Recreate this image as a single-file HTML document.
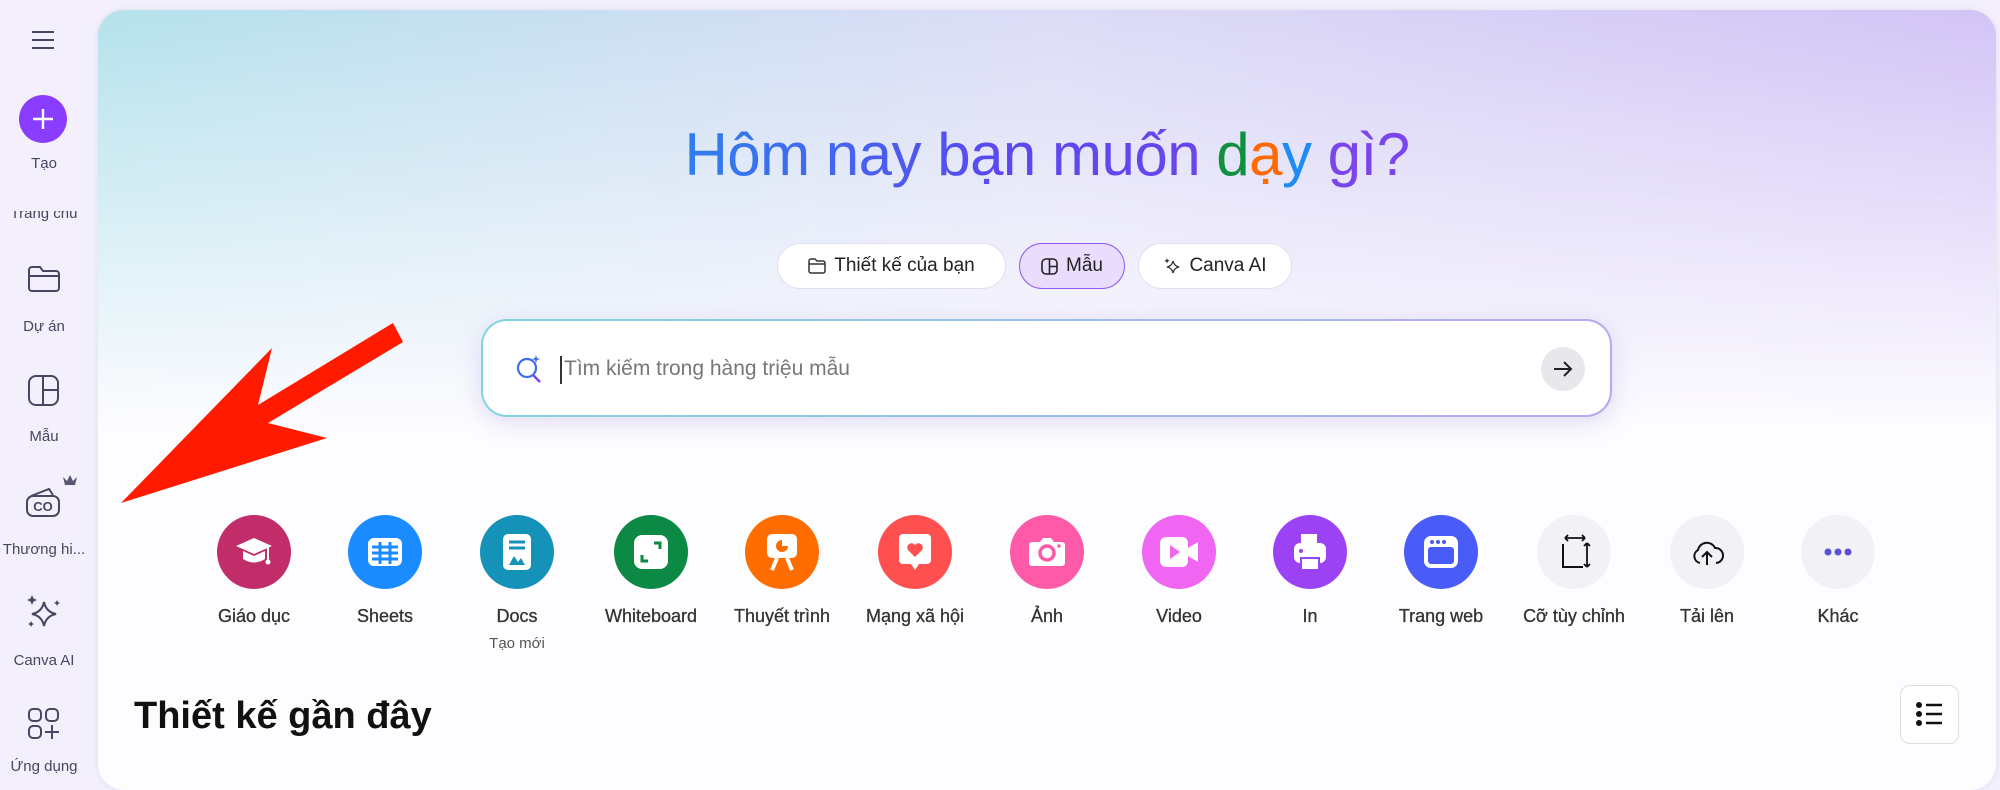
<!DOCTYPE html>
<html><head><meta charset="utf-8"><style>
*{margin:0;padding:0;box-sizing:border-box}
body{width:2000px;height:766px;overflow:hidden;background:#f3f0fb;font-family:"Liberation Sans",sans-serif;position:relative;color:#222}
.side{position:absolute;left:0;top:0;width:98px;height:766px;background:#f3f0fb}
.si{position:absolute;left:0;width:88px;text-align:center;font-size:15px;color:#4a4560}
.panel{position:absolute;left:98px;top:10px;width:1898px;height:780px;border-radius:26px;background:linear-gradient(180deg,rgba(255,255,255,0) 0,#fdfcff 420px),linear-gradient(90deg,#b4e2ec 0,#dcdcf6 50%,#d2c3f6 100%);overflow:hidden;box-shadow:0 0 6px rgba(120,100,180,.15)}
h1{position:absolute;left:0;width:100%;top:110px;text-align:center;font-weight:400;font-size:60px;letter-spacing:-0.5px}
.pill{position:absolute;top:243px;height:46px;border-radius:23px;border:1.5px solid #e4def4;background:#fff;font-size:19px;display:flex;align-items:center;justify-content:center;gap:8px;color:#222}
.search{position:absolute;left:481px;top:319px;width:1131px;height:98px;border-radius:26px;background:#fff;border:2px solid transparent;background-image:linear-gradient(#fff,#fff),linear-gradient(90deg,#7fd6df,#b9a8f0);background-origin:border-box;background-clip:padding-box,border-box;box-shadow:0 6px 24px rgba(150,130,220,.25)}
.ic{position:absolute;top:515px;width:132px;text-align:center}
.ic .c{width:74px;height:74px;border-radius:50%;margin:0 auto;display:flex;align-items:center;justify-content:center}
.ic .l{margin-top:17px;font-size:18px;color:#333;-webkit-text-stroke:0.3px #333}
.ic .s{margin-top:8px;font-size:15px;color:#555}
</style></head><body>
<div class="side">
 <svg style="position:absolute;left:31px;top:30px" width="24" height="20"><path d="M1 2h22M1 10h22M1 18h22" stroke="#4a4560" stroke-width="2"/></svg>
 <div style="position:absolute;left:19px;top:95px;width:48px;height:48px;border-radius:50%;background:#8b3dff"></div>
 <svg style="position:absolute;left:31px;top:107px" width="24" height="24"><path d="M12 2v20M2 12h20" stroke="#fff" stroke-width="2.4"/></svg>
 <div class="si" style="top:155px">Tạo</div>
 <div class="si" style="top:205px;clip-path:inset(6px 0 0 0)">Trang chủ</div>
 <svg style="position:absolute;left:27px;top:264px" width="34" height="30"><path d="M2 6a3 3 0 0 1 3-3h8l3 4h13a3 3 0 0 1 3 3v14a3 3 0 0 1-3 3H5a3 3 0 0 1-3-3zM2 12h30" fill="none" stroke="#4a4560" stroke-width="2"/></svg>
 <div class="si" style="top:318px">Dự án</div>
 <svg style="position:absolute;left:27px;top:374px" width="33" height="33"><rect x="2" y="2" width="29" height="29" rx="7" fill="none" stroke="#4a4560" stroke-width="2"/><path d="M16 2v29M16 16h15" stroke="#4a4560" stroke-width="2"/></svg>
 <div class="si" style="top:428px">Mẫu</div>
 <svg style="position:absolute;left:25px;top:486px" width="36" height="32"><path d="M6 10l18-7 4 6" fill="none" stroke="#4a4560" stroke-width="2"/><rect x="2" y="10" width="32" height="20" rx="6" fill="none" stroke="#4a4560" stroke-width="2"/><text x="18" y="25" font-size="13" font-family="Liberation Sans" text-anchor="middle" fill="#4a4560" font-weight="bold">CO</text></svg>
 <svg style="position:absolute;left:62px;top:474px" width="16" height="13"><path d="M1 3l4 4 3-6 3 6 4-4-2 8H3z" fill="#5a5570"/></svg>
 <div class="si" style="top:541px;left:-6px;width:100px;white-space:nowrap">Thương hi...</div>
 <svg style="position:absolute;left:24px;top:594px" width="38" height="36"><path d="M20 8q2 10 12 12q-10 2-12 12q-2-10-12-12q10-2 12-12z" fill="none" stroke="#4a4560" stroke-width="2"/><path d="M8 1l1.5 3.5L13 6l-3.5 1.5L8 11l-1.5-3.5L3 6l3.5-1.5zM33 6l1 2 2 1-2 1-1 2-1-2-2-1 2-1zM7 27l1 2 2 1-2 1-1 2-1-2-2-1 2-1z" fill="#4a4560"/></svg>
 <div class="si" style="top:652px">Canva AI</div>
 <svg style="position:absolute;left:27px;top:707px" width="34" height="34"><rect x="2" y="2" width="12" height="12" rx="4" fill="none" stroke="#4a4560" stroke-width="2"/><rect x="19" y="2" width="12" height="12" rx="4" fill="none" stroke="#4a4560" stroke-width="2"/><rect x="2" y="19" width="12" height="12" rx="4" fill="none" stroke="#4a4560" stroke-width="2"/><path d="M25 18v14M18 25h14" stroke="#4a4560" stroke-width="2"/></svg>
 <div class="si" style="top:758px">Ứng dụng</div>
</div>
<div class="panel">
 <h1><span style="background:linear-gradient(90deg,#2f7fee,#5b48f0 60%,#6a45ec);-webkit-background-clip:text;background-clip:text;color:transparent">Hôm nay bạn muốn </span><span style="color:#11913f">d</span><span style="color:#ff6a00">ạ</span><span style="color:#1e8cf5">y</span><span style="color:#7a45ea"> gì?</span></h1>
</div>
<div class="pill" style="left:777px;width:229px"><svg width="18" height="16"><path d="M1 3a2 2 0 0 1 2-2h4l2 2h6a2 2 0 0 1 2 2v8a2 2 0 0 1-2 2H3a2 2 0 0 1-2-2zM1 6h16" fill="none" stroke="#333" stroke-width="1.5"/></svg>Thiết kế của bạn</div>
<div class="pill" style="left:1019px;width:106px;background:#e9dcfd;border-color:#8b5ef0"><svg width="17" height="17"><rect x="1" y="1" width="15" height="15" rx="4" fill="none" stroke="#222" stroke-width="1.6"/><path d="M8.5 1v15M8.5 8.5h7" stroke="#222" stroke-width="1.6"/></svg>Mẫu</div>
<div class="pill" style="left:1138px;width:154px"><svg width="18" height="18"><path d="M10 4q1 5 6 6q-5 1-6 6q-1-5-6-6q5-1 6-6z" fill="none" stroke="#333" stroke-width="1.3"/><path d="M4 1l.8 2 2 .8-2 .8L4 6.6l-.8-2-2-.8 2-.8z" fill="#333"/></svg>Canva AI</div>
<div class="search">
 <svg style="position:absolute;left:31px;top:32px" width="32" height="32"><circle cx="13" cy="15" r="9" fill="none" stroke="#3d6ee8" stroke-width="2.2"/><path d="M19 22l7 7" stroke="#7a45ea" stroke-width="2.5"/><path d="M22 2l1 3 3 1-3 1-1 3-1-3-3-1 3-1z" fill="#3d6ee8"/></svg>
 <div style="position:absolute;left:77px;top:35px;width:2px;height:28px;background:#333"></div>
 <div style="position:absolute;left:81px;top:36px;font-size:21px;color:#777">Tìm kiếm trong hàng triệu mẫu</div>
 <div style="position:absolute;left:1058px;top:26px;width:44px;height:44px;border-radius:50%;background:#e8e7ec"></div>
 <svg style="position:absolute;left:1069px;top:37px" width="22" height="22"><path d="M2 11h17M12 4l7 7-7 7" fill="none" stroke="#222" stroke-width="2"/></svg>
</div>
<svg style="position:absolute;left:0;top:0" width="500" height="520"><polygon points="121,503 272,348 258,405 393,323 403,342 268,423 327,438" fill="#ff1a00"/></svg>

<div class="ic" style="left:188px"><div class="c" style="background:#c02d68"><svg width="40" height="36"><path d="M20 4l18 8-18 8-18-8z" fill="#fff"/><path d="M9 17v8q11 7 22 0v-8l-11 5z" fill="#fff"/><path d="M34 13v13" stroke="#fff" stroke-width="2"/><circle cx="34" cy="28" r="2.5" fill="#fff"/></svg></div><div class="l">Giáo dục</div></div>
<div class="ic" style="left:319px"><div class="c" style="background:#1a8cff"><svg width="36" height="30"><rect x="1" y="1" width="34" height="28" rx="6" fill="#fff"/><path d="M5 10h26M5 16h26M5 22h26M13 5v22M23 5v22" stroke="#1a8cff" stroke-width="3"/></svg></div><div class="l">Sheets</div></div>
<div class="ic" style="left:451px"><div class="c" style="background:#1592b8"><svg width="30" height="38"><rect x="1" y="1" width="28" height="36" rx="5" fill="#fff"/><path d="M7 9h16M7 15h16" stroke="#1592b8" stroke-width="3"/><path d="M7 32l5-9 4 6 3-4 4 7z" fill="#1592b8"/></svg></div><div class="l">Docs</div><div class="s">Tạo mới</div></div>
<div class="ic" style="left:585px"><div class="c" style="background:#0c8a45"><svg width="36" height="36"><rect x="1" y="1" width="34" height="34" rx="8" fill="#fff"/><path d="M21 9h6v6M15 27H9v-6" fill="none" stroke="#0c8a45" stroke-width="3"/></svg></div><div class="l">Whiteboard</div></div>
<div class="ic" style="left:716px"><div class="c" style="background:#ff6c00"><svg width="34" height="40"><rect x="2" y="2" width="30" height="24" rx="5" fill="#fff"/><path d="M12 26l-5 12M22 26l5 12" stroke="#fff" stroke-width="4"/><path d="M17 8a6 6 0 1 0 6 6h-6z" fill="#ff6c00"/></svg></div><div class="l">Thuyết trình</div></div>
<div class="ic" style="left:849px"><div class="c" style="background:#ff5050"><svg width="36" height="40"><path d="M6 2h24a4 4 0 0 1 4 4v22a4 4 0 0 1-4 4h-8l-4 6-4-6H6a4 4 0 0 1-4-4V6a4 4 0 0 1 4-4z" fill="#fff"/><path d="M18 25l-7-7a4 4 0 0 1 7-5 4 4 0 0 1 7 5z" fill="#ff5050"/></svg></div><div class="l">Mạng xã hội</div></div>
<div class="ic" style="left:981px"><div class="c" style="background:#ff5aa8"><svg width="38" height="32"><path d="M4 6h8l3-4h8l3 4h8a3 3 0 0 1 3 3v18a3 3 0 0 1-3 3H4a3 3 0 0 1-3-3V9a3 3 0 0 1 3-3z" fill="#fff"/><circle cx="19" cy="17" r="7" fill="none" stroke="#ff5aa8" stroke-width="3.5"/><circle cx="31" cy="10" r="1.8" fill="#ff5aa8"/></svg></div><div class="l">Ảnh</div></div>
<div class="ic" style="left:1113px"><div class="c" style="background:#f065f2"><svg width="40" height="32"><rect x="1" y="1" width="28" height="30" rx="6" fill="#fff"/><path d="M29 12l10-6v20l-10-6z" fill="#fff"/><path d="M11 9v14l10-7z" fill="#f065f2"/></svg></div><div class="l">Video</div></div>
<div class="ic" style="left:1244px"><div class="c" style="background:#9b42f5"><svg width="36" height="38"><rect x="9" y="1" width="16" height="10" fill="#fff"/><rect x="2" y="10" width="32" height="20" rx="6" fill="#fff"/><circle cx="9" cy="18" r="2" fill="#9b42f5"/><rect x="9" y="25" width="18" height="12" fill="#fff" stroke="#9b42f5" stroke-width="2"/></svg></div><div class="l">In</div></div>
<div class="ic" style="left:1375px"><div class="c" style="background:#4a5cf7"><svg width="36" height="34"><rect x="1" y="1" width="34" height="32" rx="7" fill="#fff"/><rect x="5" y="12" width="26" height="17" rx="3" fill="#4a5cf7"/><circle cx="9" cy="7" r="2" fill="#4a5cf7"/><circle cx="15" cy="7" r="2" fill="#4a5cf7"/><circle cx="21" cy="7" r="2" fill="#4a5cf7"/></svg></div><div class="l">Trang web</div></div>
<div class="ic" style="left:1508px"><div class="c" style="background:#f2f1f5"><svg width="34" height="36"><path d="M6 10v23h20" fill="none" stroke="#111" stroke-width="2"/><path d="M8 4h20M8 4l3-3M8 4l3 3M28 4l-3-3M28 4l-3 3M30 9v24M30 9l-3 3M30 9l3 3M30 33l-3-3M30 33l3-3" fill="none" stroke="#111" stroke-width="1.8"/></svg></div><div class="l">Cỡ tùy chỉnh</div></div>
<div class="ic" style="left:1641px"><div class="c" style="background:#f2f1f5"><svg width="34" height="30"><path d="M10 26a7 7 0 0 1-2-13 9 9 0 0 1 17-2 7 7 0 0 1 1 15" fill="none" stroke="#111" stroke-width="2"/><path d="M17 28V15M12 20l5-5 5 5" fill="none" stroke="#111" stroke-width="2"/></svg></div><div class="l">Tải lên</div></div>
<div class="ic" style="left:1772px"><div class="c" style="background:#f2f1f5"><svg width="28" height="8"><circle cx="4" cy="4" r="3.5" fill="#5b4fdc"/><circle cx="14" cy="4" r="3.5" fill="#5b4fdc"/><circle cx="24" cy="4" r="3.5" fill="#5b4fdc"/></svg></div><div class="l">Khác</div></div>

<div style="position:absolute;left:134px;top:695px;font-size:38px;font-weight:bold;color:#111">Thiết kế gần đây</div>
<div style="position:absolute;left:1900px;top:685px;width:59px;height:59px;border-radius:10px;border:1.5px solid #ddd;background:#fff"></div>
<svg style="position:absolute;left:1916px;top:701px" width="28" height="26"><circle cx="3" cy="4" r="3" fill="#111"/><circle cx="3" cy="13" r="3" fill="#111"/><circle cx="3" cy="22" r="3" fill="#111"/><path d="M10 4h16M10 13h16M10 22h16" stroke="#111" stroke-width="2.4"/></svg>
</body></html>
